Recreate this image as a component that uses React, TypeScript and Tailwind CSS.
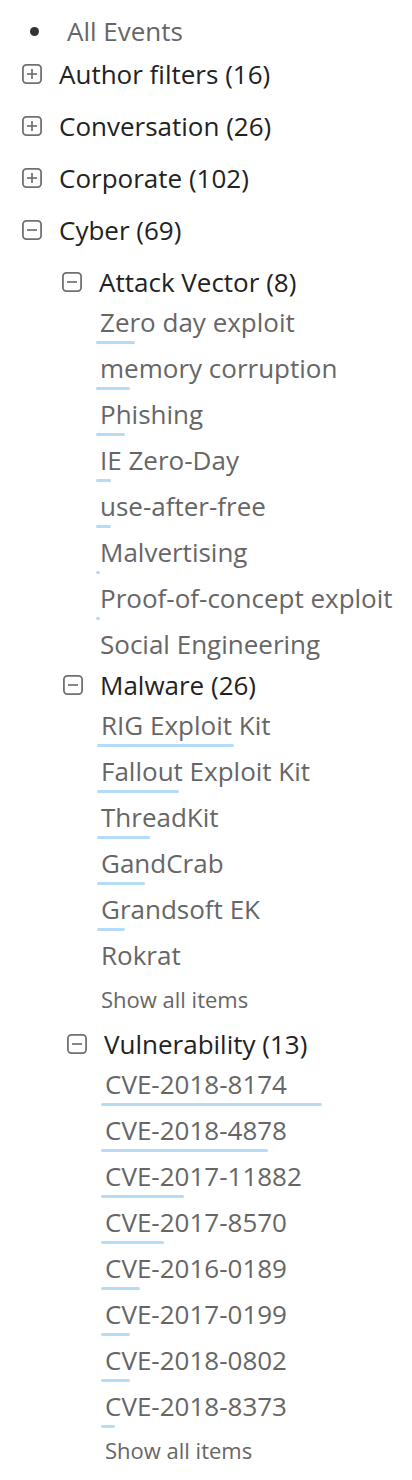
import React from "react";

type Item = { label: string; bar: number };
type Group = { title: string; offset: string; items: Item[]; showAll?: boolean };

const groups: Group[] = [
  {
    title: "Attack Vector (8)",
    offset: "ml-0",
    items: [
      { label: "Zero day exploit", bar: 39 },
      { label: "memory corruption", bar: 34 },
      { label: "Phishing", bar: 29 },
      { label: "IE Zero-Day", bar: 15 },
      { label: "use-after-free", bar: 15 },
      { label: "Malvertising", bar: 4 },
      { label: "Proof-of-concept exploit", bar: 4 },
      { label: "Social Engineering", bar: 0 },
    ],
  },
  {
    title: "Malware (26)",
    offset: "ml-[1px]",
    showAll: true,
    items: [
      { label: "RIG Exploit Kit", bar: 137 },
      { label: "Fallout Exploit Kit", bar: 82 },
      { label: "ThreadKit", bar: 53 },
      { label: "GandCrab", bar: 48 },
      { label: "Grandsoft EK", bar: 28 },
      { label: "Rokrat", bar: 0 },
    ],
  },
  {
    title: "Vulnerability (13)",
    offset: "ml-[5px]",
    showAll: true,
    items: [
      { label: "CVE-2018-8174", bar: 221 },
      { label: "CVE-2018-4878", bar: 167 },
      { label: "CVE-2017-11882", bar: 83 },
      { label: "CVE-2017-8570", bar: 63 },
      { label: "CVE-2016-0189", bar: 39 },
      { label: "CVE-2017-0199", bar: 29 },
      { label: "CVE-2018-0802", bar: 29 },
      { label: "CVE-2018-8373", bar: 14 },
    ],
  },
];

function Toggle({ open }: { open: boolean }) {
  return (
    <svg width="20" height="20" viewBox="0 0 20 20" className="shrink-0">
      <rect x="0.9" y="0.9" width="18.2" height="18.2" rx="3.6" fill="none" stroke="#707070" strokeWidth="1.8" />
      <line x1="5" y1="10" x2="15" y2="10" stroke="#707070" strokeWidth="1.7" />
      {!open && <line x1="10" y1="5" x2="10" y2="15" stroke="#707070" strokeWidth="1.7" />}
    </svg>
  );
}

function TopRow({ label, open }: { label: string; open: boolean }) {
  return (
    <div className="flex items-center h-[36px] pl-[22px] gap-[17px] text-[#222]">
      <Toggle open={open} />
      <span className="leading-[36px] whitespace-nowrap">{label}</span>
    </div>
  );
}

export default function App() {
  return (
    <div className="bg-white w-[412px] min-h-[1480px] pt-[13px] text-[26px] font-['Open_Sans',sans-serif] overflow-hidden">
      <div className="flex items-center h-[36px] mb-[7px]">
        <span className="ml-[30px] w-[9px] h-[9px] rounded-full bg-[#333]" />
        <span className="ml-[28px] text-[#666] leading-[36px]">All Events</span>
      </div>
      <div className="flex flex-col gap-[16px]">
        <TopRow label="Author filters (16)" open={false} />
        <TopRow label="Conversation (26)" open={false} />
        <TopRow label="Corporate (102)" open={false} />
        <div className="flex flex-col gap-[16px]">
          <TopRow label="Cyber (69)" open={true} />
          <div className="pl-[62px] flex flex-col gap-[1px]">
            {groups.map((g) => (
              <div key={g.title} className={`flex flex-col ${g.offset}`}>
                <div className="flex items-center h-[36px] gap-[17px] text-[#222]">
                  <Toggle open={true} />
                  <span className="leading-[36px] whitespace-nowrap">{g.title}</span>
                </div>
                <div className="mt-[4px] ml-[34px] flex flex-col gap-[6px]">
                  {g.items.map((it) => (
                    <div key={it.label} className="flex flex-col">
                      <span className="pl-[4px] leading-[36px] text-[#666] whitespace-nowrap">{it.label}</span>
                      <div
                        className="mt-[1px] h-[3px] rounded-full bg-[#b5dcf7]"
                        style={{ width: it.bar }}
                      />
                    </div>
                  ))}
                  {g.showAll && (
                    <span className="pl-[4px] text-[22px] leading-[32px] text-[#666] mb-[10px] whitespace-nowrap">
                      Show all items
                    </span>
                  )}
                </div>
              </div>
            ))}
          </div>
        </div>
      </div>
    </div>
  );
}
